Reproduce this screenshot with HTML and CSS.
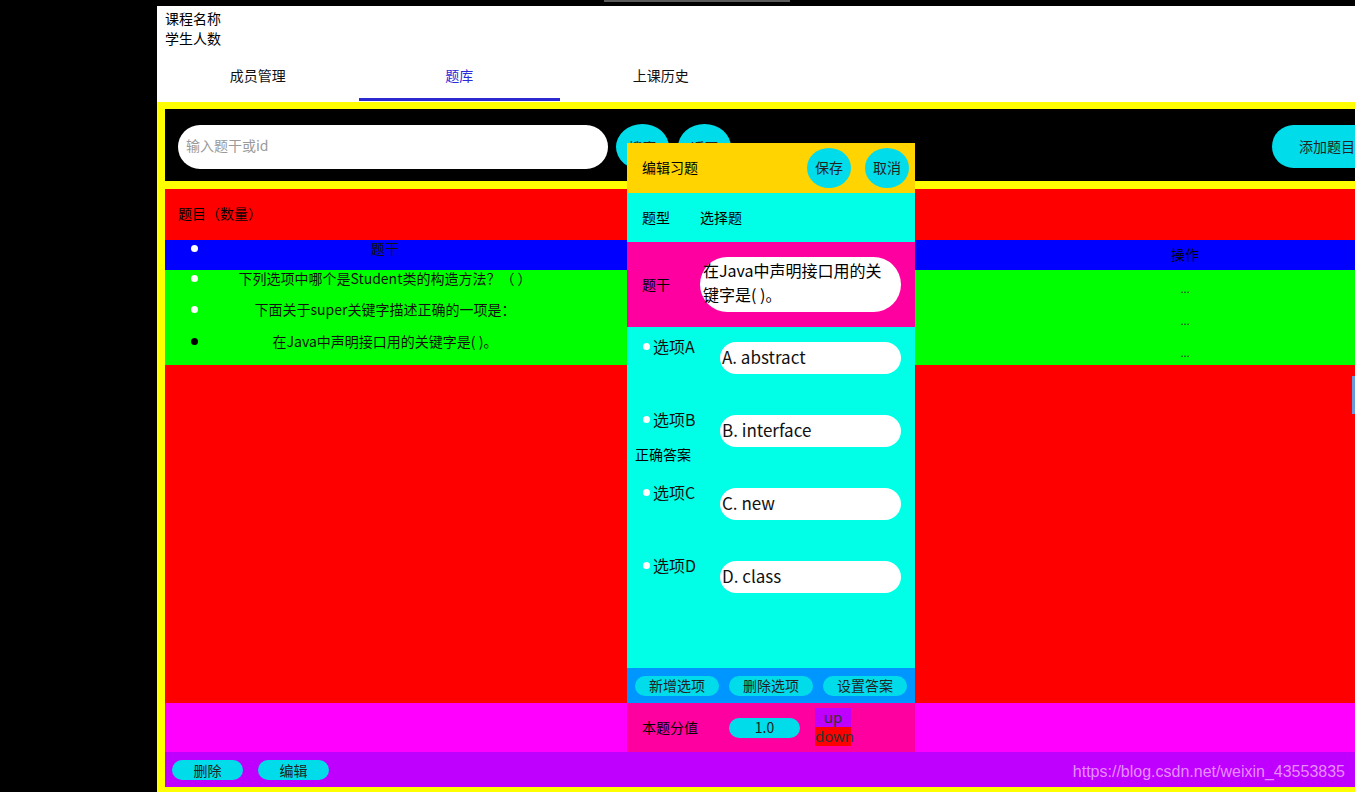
FILE: index.html
```html
<!DOCTYPE html>
<html lang="zh">
<head>
<meta charset="utf-8">
<title>题库</title>
<link rel="stylesheet" href="styles.css">
</head>
<body>
<div class="app">
  <div class="topstrip"><div class="tabgray"></div></div>
  <div class="layout">
    <div class="side"></div>
    <div class="main">
      <div class="head">
        <div class="info">
          <div>课程名称</div>
          <div>学生人数</div>
        </div>
        <div class="tabs">
          <div class="tab"><span class="tab-label">成员管理</span><span class="tab-bar"></span></div>
          <div class="tab active"><span class="tab-label">题库</span><span class="tab-bar"></span></div>
          <div class="tab"><span class="tab-label">上课历史</span><span class="tab-bar"></span></div>
        </div>
      </div>
      <div class="frame">
        <div class="search">
          <div class="sinput">输入题干或id</div>
          <div class="round">搜索</div>
          <div class="round">返回</div>
          <div class="add">添加题目</div>
        </div>
        <div class="content">
          <div class="title">题目（数量）</div>
          <div class="thead">
            <div class="c1 top"><span class="dot white"></span><span class="ctext">题干</span><span class="pad"></span></div>
            <div class="c2"></div>
            <div class="c3 mid">操作</div>
          </div>
          <div class="tbody">
            <div class="trow">
              <div class="c1 top"><span class="dot white"></span><span class="ctext">下列选项中哪个是Student类的构造方法？（ ）</span><span class="pad"></span></div>
              <div class="c2"></div>
              <div class="c3 mid dots">...</div>
            </div>
            <div class="trow">
              <div class="c1 top"><span class="dot white"></span><span class="ctext">下面关于super关键字描述正确的一项是：</span><span class="pad"></span></div>
              <div class="c2"></div>
              <div class="c3 mid dots">...</div>
            </div>
            <div class="trow">
              <div class="c1 top"><span class="dot black"></span><span class="ctext">在Java中声明接口用的关键字是( )。</span><span class="pad"></span></div>
              <div class="c2"></div>
              <div class="c3 mid dots">...</div>
            </div>
          </div>
        </div>
        <div class="tip"></div>
        <div class="foot">
          <div class="fbtn">删除</div>
          <div class="fbtn">编辑</div>
        </div>
      </div>
    </div>
  </div>

  <div class="dialog">
    <div class="dlg-head">
      <span>编辑习题</span>
      <div class="dlg-actions">
        <div class="oval">保存</div>
        <div class="oval">取消</div>
      </div>
    </div>
    <div class="dlg-type">
      <span>题型</span><span class="val">选择题</span>
    </div>
    <div class="dlg-stem">
      <span>题干</span>
      <div class="stem-box">在Java中声明接口用的关键字是( )。</div>
    </div>
    <div class="dlg-opts">
      <div class="opt"><div class="opt-label"><span class="odot"></span>选项A</div><div class="opt-input">A. abstract</div></div>
      <div class="opt"><div class="opt-label"><span class="odot"></span>选项B</div><div class="opt-input">B. interface</div></div>
      <div class="opt"><div class="opt-label"><span class="odot"></span>选项C</div><div class="opt-input">C. new</div></div>
      <div class="opt"><div class="opt-label"><span class="odot"></span>选项D</div><div class="opt-input">D. class</div></div>
      <div class="correct">正确答案</div>
    </div>
    <div class="dlg-btns">
      <div class="pbtn">新增选项</div>
      <div class="pbtn">删除选项</div>
      <div class="pbtn">设置答案</div>
    </div>
    <div class="dlg-score">
      <span>本题分值</span>
      <div class="score">1.0</div>
      <div class="updown">
        <div class="up">up</div>
        <div class="down">down</div>
      </div>
    </div>
  </div>

  <div class="scrollthumb"></div>
  <div class="watermark">https://blog.csdn.net/weixin_43553835</div>
</div>
</body>
</html>
```
FILE: styles.css
```css
* { box-sizing: border-box; margin: 0; padding: 0; }
html, body { width: 1355px; height: 792px; overflow: hidden; background: #000; }
body {
  font-family: "Noto Sans CJK SC", "Noto Sans", sans-serif;
  font-size: 14px;
  color: #000;
}
.app { position: relative; width: 1355px; height: 792px; overflow: hidden; }

.topstrip { height: 6px; display: flex; }
.tabgray { margin-left: 604px; width: 186px; height: 2px; background: #5a5a5a; }

.layout { display: flex; height: 786px; }
.side { width: 157px; flex: none; background: #000; }
.main { flex: 1; display: flex; flex-direction: column; min-width: 0; }

.head { background: #fff; height: 96px; display: flex; flex-direction: column; }
.info { padding: 2px 8px 0; line-height: 20px; }
.tabs { display: flex; margin-top: auto; height: 53px; }
.tab { width: 201.5px; display: flex; flex-direction: column; align-items: center; justify-content: flex-end; }
.tab-label { line-height: 20px; margin-bottom: 13px; color: #111; }
.tab-bar { width: 100%; height: 3px; margin-bottom: 1px; }
.tab.active .tab-label { color: #2a2ad8; }
.tab.active .tab-bar { background: #2a2ad0; }

.frame { flex: 1; background: #ff0; padding: 7px 0 5px 8px; display: flex; flex-direction: column; }

.search { height: 72px; background: #000; display: flex; align-items: center; padding: 3px 0 0 13px; margin-bottom: 8px; }
.sinput { width: 430px; height: 44px; border-radius: 22px; background: #fff; color: #9a9a9a; padding: 0 0 3px 8px; display: flex; align-items: center; }
.round { width: 53px; height: 46px; border-radius: 50%; background: #00dcea; margin-left: 8px; display: flex; align-items: center; justify-content: center; color: #222; }
.round + .round { margin-left: 9px; }
.add { margin-left: auto; margin-right: -27px; width: 110px; height: 43px; border-radius: 22px; background: #00dcea; display: flex; align-items: center; justify-content: center; color: #222; padding-bottom: 2px; }

.content { height: 514px; background: #f00; display: flex; flex-direction: column; }
.title { height: 51px; display: flex; align-items: center; padding: 0 0 3px 13px; }
.thead { height: 30px; background: #0000ff; display: grid; grid-template-columns: 440px 1fr 340px; }
.tbody { height: 95px; background: #00ff00; display: flex; flex-direction: column; }
.trow { flex: 1; display: grid; grid-template-columns: 440px 1fr 340px; }
.c1 { display: flex; align-items: center; }
.c1.top { align-self: start; padding-top: 0; height: 17px; }
.dot { width: 7px; height: 7px; border-radius: 50%; margin-left: 26px; flex: none; margin-top: -1px; }
.dot.white { background: #fff; }
.dot.black { background: #000; }
.ctext { flex: 1; text-align: center; line-height: 16px; color: #111; margin-top: -2px; }
.pad { width: 33px; flex: none; }
.c3.mid { align-self: center; text-align: center; }
.thead .c3.mid { padding-bottom: 2px; }
.dots { font-size: 11px; color: #333; padding-top: 5px; }

.tip { height: 49px; background: #ff00ff; }
.foot { height: 35px; background: #c000ff; display: flex; align-items: center; gap: 15px; padding-left: 7px; }
.fbtn { width: 71px; height: 20px; border-radius: 10px; background: #00dcea; display: flex; align-items: center; justify-content: center; color: #222; }

/* dialog overlay */
.dialog { position: absolute; left: 627px; top: 143px; width: 288px; display: flex; flex-direction: column; }
.dlg-head { height: 50px; background: #ffd400; display: flex; align-items: center; padding: 0 6px 0 15px; }
.dlg-head > span { padding-bottom: 2px; }
.dlg-actions { margin-left: auto; display: flex; gap: 14px; }
.oval { width: 44px; height: 40px; border-radius: 50%; background: #00dcea; display: flex; align-items: center; justify-content: center; color: #222; padding-bottom: 2px; }
.dlg-type { height: 49px; background: #00ffe6; display: flex; align-items: center; padding: 0 0 2px 15px; }
.dlg-type .val { margin-left: 30px; }
.dlg-stem { height: 85px; background: #ff00a0; display: flex; align-items: center; padding-left: 15px; }
.dlg-stem > span { padding-bottom: 2px; }
.stem-box { margin-left: 30px; width: 201px; height: 55px; border-radius: 28px; background: #fff; font-size: 16px; line-height: 24px; padding: 1px 4px 0 3px; color: #000; }
.dlg-opts { position: relative; height: 341px; background: #00ffe6; padding: 15px 0 0 16px; display: flex; flex-direction: column; gap: 41px; }
.opt { display: flex; align-items: flex-start; height: 32px; }
.opt-label { width: 77px; flex: none; display: flex; align-items: center; font-size: 16px; line-height: 16px; margin-top: -4px; color: #111; }
.odot { width: 7px; height: 7px; border-radius: 50%; background: #fff; margin-right: 3px; margin-top: 1px; }
.opt-input { width: 181px; height: 32px; border-radius: 16px; background: #fff; font-size: 17px; line-height: 30px; padding-left: 2px; color: #111; }
.correct { position: absolute; left: 8px; top: 119px; line-height: 16px; }
.dlg-btns { height: 35px; background: #0096ff; display: flex; align-items: center; gap: 10px; padding-left: 8px; }
.pbtn { width: 84px; height: 20px; border-radius: 10px; background: #00dcea; display: flex; align-items: center; justify-content: center; color: #222; padding-bottom: 1px; }
.dlg-score { height: 49px; background: #ff00a0; display: flex; align-items: center; padding-left: 15px; }
.dlg-score > span { padding-bottom: 2px; }
.score { margin-left: 31px; width: 71px; height: 20px; border-radius: 10px; background: #00dcea; display: flex; align-items: center; justify-content: center; color: #222; padding-bottom: 1px; }
.updown { margin-left: 15px; width: 36px; display: flex; flex-direction: column; margin-top: -2px; }
.up, .down { height: 19px; line-height: 18px; text-align: center; font-size: 15px; color: #333; font-family: "Noto Sans", sans-serif; }
.up { background: #c000ff; }
.down { background: #f00; }

.scrollthumb { position: absolute; left: 1352px; top: 376px; width: 3px; height: 38px; background: #6a9ad8; }
.watermark { position: absolute; right: 10px; bottom: 11px; font-family: "Liberation Sans", Arial, sans-serif; font-size: 16px; line-height: 18px; color: rgba(255, 220, 255, 0.65); }
```
